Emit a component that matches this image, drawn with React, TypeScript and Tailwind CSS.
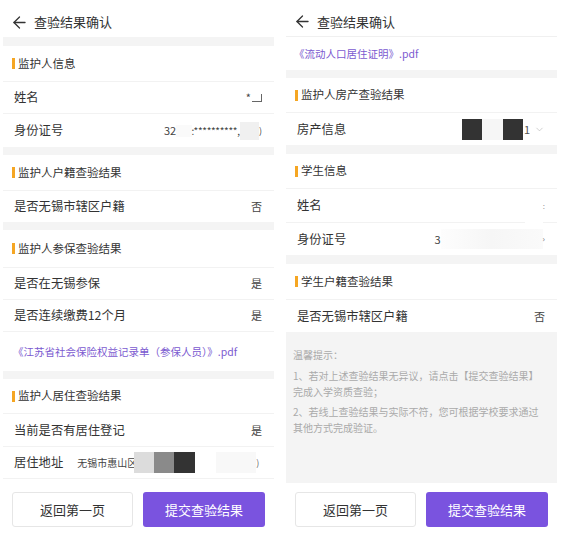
import { ArrowLeft, ChevronDown } from 'lucide-react';

const font = { fontFamily: '"Noto Sans CJK SC", "Noto Sans", sans-serif' };

function Header({ border }: { border?: boolean }) {
  return (
    <div className={`h-[37px] flex items-center gap-[5px] pl-[7px] pt-[7px] ${border ? 'border-b border-[#f0f0f0]' : ''}`}>
      <ArrowLeft size={19} strokeWidth={1.6} className="text-[#333]" />
      <span className="text-[13px] text-[#333]">查验结果确认</span>
    </div>
  );
}

function Band({ h = 'h-[8px]' }: { h?: string }) {
  return <div className={`${h} bg-[#f4f4f4]`} />;
}

function Section({ title, h = 'h-[36px]' }: { title: string; h?: string }) {
  return (
    <div className={`${h} flex items-center pl-[9px] border-b border-[#f2f2f2]`}>
      <span className="w-[3px] h-[11px] bg-[#f5a623] mr-[3px]" />
      <span className="text-[11.5px] text-[#333]">{title}</span>
    </div>
  );
}

function Row({
  label,
  children,
  h = 'h-[32px]',
  border = true,
}: {
  label: string;
  children?: React.ReactNode;
  h?: string;
  border?: boolean;
}) {
  return (
    <div className={`${h} flex items-center justify-between pl-[11px] pr-[12px] ${border ? 'border-b border-[#f2f2f2]' : ''}`}>
      <span className="text-[12.3px] text-[#333] shrink-0">{label}</span>
      <div className="flex items-center text-[11px] text-[#444]">{children}</div>
    </div>
  );
}

function Buttons() {
  return (
    <div className="flex gap-[10px] px-[9px]">
      <button className="w-[121px] h-[35px] rounded-[3px] border border-[#e6e6e6] bg-white text-[13px] text-[#333]">
        返回第一页
      </button>
      <button className="w-[122px] h-[35px] rounded-[3px] bg-[#7a53df] text-[13px] text-white">
        提交查验结果
      </button>
    </div>
  );
}

function LeftPanel() {
  return (
    <div className="w-[271px] flex flex-col">
      <Header />
      <Band h="h-[9px]" />
      <Section title="监护人信息" />
      <Row label="姓名">
        <span>*</span>
        <span className="w-[10px] h-[8px] border-b border-r border-[#666] ml-[1px]" />
      </Row>
      <Row label="身份证号" border={false} h="h-[33px]">
        <span className="w-[98px] flex items-center">
          <span>32</span>
          <span className="w-[16px] h-[12px] bg-[#fafafa]" />
          <span className="text-[10px] tracking-[-0.3px]">:**********,</span>
          <span className="w-[20px] h-[18px] bg-[#f0f0f0]" />
          <span className="text-[9px]">)</span>
        </span>
      </Row>
      <Band />
      <Section title="监护人户籍查验结果" />
      <Row label="是否无锡市辖区户籍" border={false} h="h-[31px]">否</Row>
      <Band />
      <Section title="监护人参保查验结果" h="h-[38px]" />
      <Row label="是否在无锡参保">是</Row>
      <Row label="是否连续缴费12个月">是</Row>
      <div className="h-[39px] flex items-center pl-[10px] text-[10.5px] text-[#7b5ad0]">
        《江苏省社会保险权益记录单（参保人员）》.pdf
      </div>
      <Band />
      <Section title="监护人居住查验结果" h="h-[35px]" />
      <Row label="当前是否有居住登记" h="h-[33px]">是</Row>
      <div className="h-[32px] flex items-center pl-[11px] pr-[12px] border-b border-[#f2f2f2]">
        <span className="text-[12.3px] text-[#333]">居住地址</span>
        <span className="ml-[14px] text-[10px] text-[#444]">无锡市惠山区</span>
        <span className="w-[20px] h-[21px] bg-[#dcdcdc] -ml-[3px]" />
        <span className="w-[20px] h-[21px] bg-[#8a8a8a]" />
        <span className="w-[21px] h-[21px] bg-[#333]" />
        <span className="w-[40px] h-[21px] bg-[#f8f8f8] ml-[21px]" />
        <span className="text-[9px] text-[#666]">)</span>
      </div>
      <div className="mt-[13px]">
        <Buttons />
      </div>
    </div>
  );
}

function RightPanel() {
  return (
    <div className="w-[271px] flex flex-col">
      <Header border />
      <div className="h-[33px] flex items-center pl-[8px] text-[10.5px] text-[#7b5ad0]">
        《流动人口居住证明》.pdf
      </div>
      <Band />
      <Section title="监护人房产查验结果" h="h-[35px]" />
      <Row label="房产信息" border={false}>
        <span className="w-[20px] h-[21px] bg-[#333]" />
        <span className="w-[21px] h-[21px] bg-[#f6f6f6]" />
        <span className="w-[20px] h-[21px] bg-[#333]" />
        <span className="ml-[1px] text-[#555]">1</span>
        <ChevronDown size={11} strokeWidth={1.2} className="text-[#aaa] ml-[4px]" />
      </Row>
      <Band h="h-[9px]" />
      <Section title="学生信息" h="h-[35px]" />
      <Row label="姓名" h="h-[34px]">
        <span className="w-[18px] h-[34px] bg-white" />
        <span className="text-[8px] text-[#999]">:</span>
      </Row>
      <Row label="身份证号" border={false}>
        <span className="text-[#444]">3</span>
        <span className="w-[102px] h-[20px] bg-gradient-to-r from-[#fdfdfd] via-[#f6f6f6] to-[#fafafa]" />
        <span className="text-[8px] text-[#666]">›</span>
      </Row>
      <Band h="h-[9px]" />
      <Section title="学生户籍查验结果" />
      <Row label="是否无锡市辖区户籍" border={false}>否</Row>
      <div className="h-[151px] bg-[#f4f4f4] pl-[7px] pt-[15px] text-[10px] leading-[16px] text-[#aaa]">
        <div className="w-[248px]">
          <p>温馨提示：</p>
          <p className="mt-[5px]">1、若对上述查验结果无异议，请点击【提交查验结果】完成入学资质查验；</p>
          <p className="mt-[4px]">2、若线上查验结果与实际不符，您可根据学校要求通过其他方式完成验证。</p>
        </div>
      </div>
      <div className="mt-[9px]">
        <Buttons />
      </div>
    </div>
  );
}

export default function App() {
  return (
    <div className="w-[562px] h-[539px] bg-white flex gap-[12px] pl-[3px] overflow-hidden" style={font}>
      <LeftPanel />
      <RightPanel />
    </div>
  );
}
